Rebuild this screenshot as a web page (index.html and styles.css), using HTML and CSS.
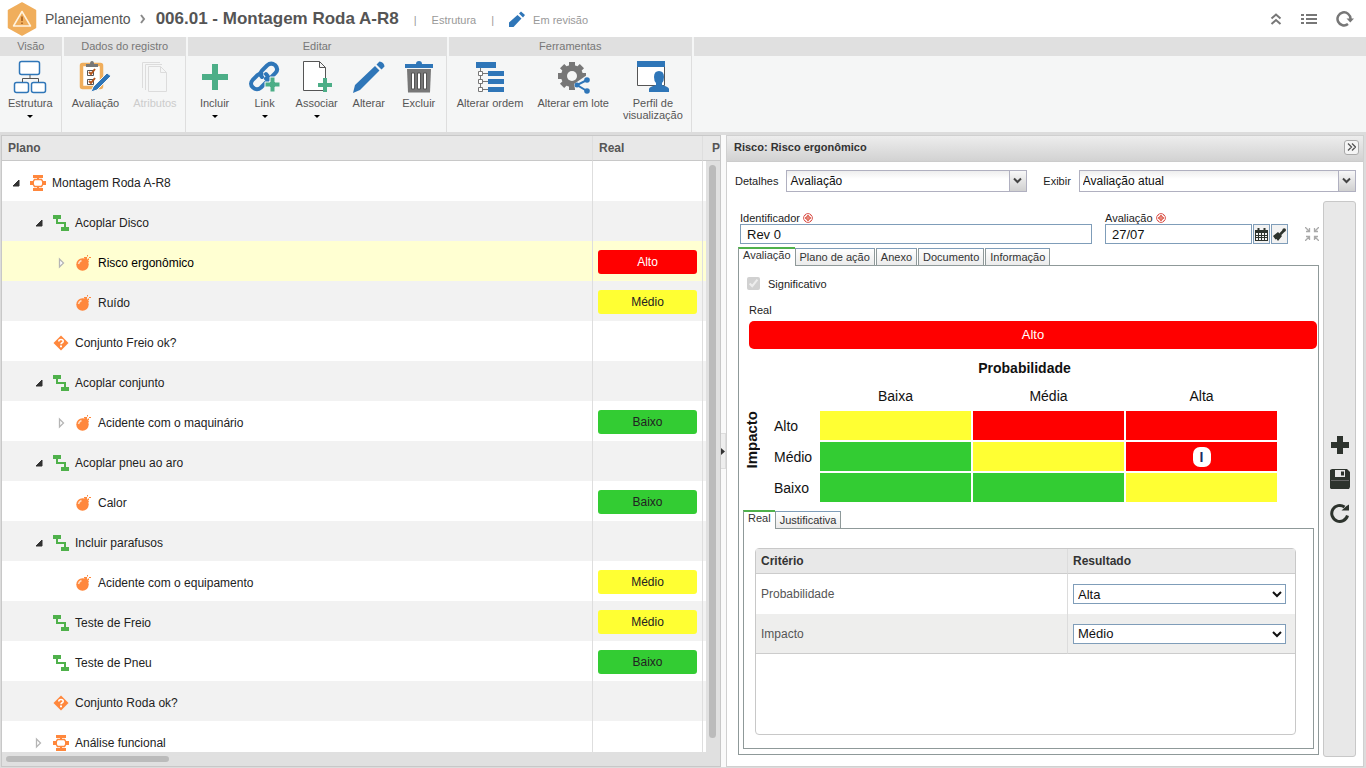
FILE: index.html
```html
<!DOCTYPE html>
<html lang="pt-BR">
<head>
  <meta charset="UTF-8">
  <meta name="viewport" content="width=device-width, initial-scale=1.0">
  <title>Planejamento</title>
  <link rel="stylesheet" href="styles.css">
</head>
<body>

  <!-- Shared icons -->
  <svg class="sprite" aria-hidden="true">
    <symbol id="open" viewBox="0 0 12 12"><path d="M9 3v6H3z" fill="#333" stroke="#333" stroke-linejoin="round"/></symbol>
    <symbol id="closed" viewBox="0 0 12 12"><path d="M3.500 2v8l4-4z" fill="#fff" stroke="#b5b5b5" stroke-width="1.300"/></symbol>
    <symbol id="plan" viewBox="0 0 16 16">
      <path d="M3 0h10v3H3zM3 13h10v3H3zM7 2h2v3H7zM7 11h2v3H7zM0 6h4v4H0zM12 6h4v4h-4z" fill="#ff873c"/>
      <path d="M4.500 4.500h7l2 3.500-2 3.500h-7L2.500 8z" fill="none" stroke="#ff873c" stroke-width="1.500"/>
    </symbol>
    <symbol id="activity" viewBox="0 0 16 16">
      <path d="M0 0h8v4H0zM8 12h8v4H8z" fill="#4fb14b"/>
      <path d="M4 3v5h8v5" fill="none" stroke="#4fb14b" stroke-width="2"/>
    </symbol>
    <symbol id="bomb" viewBox="0 0 16 16">
      <circle cx="6.500" cy="9.500" r="6.200" fill="#ff873c"/>
      <path d="M7 4l3.500-1.500 2.500 4-2 2z" fill="#ff873c"/>
      <path d="M8 2.500h3M13 2.500h2M11.500 0v1.500M12.500 3.500v1.500" stroke="#ff873c" fill="none"/>
      <path d="M2.500 9q.5-2.500 3-3.500" stroke="#ffdcc2" stroke-width="1.500" fill="none"/>
    </symbol>
    <symbol id="decision" viewBox="0 0 16 16">
      <path d="M8 .5L15.500 8 8 15.500.5 8z" fill="#ff873c"/>
      <path d="M5.800 6.500q0-2 2.200-2t2.200 1.700q0 1-1.100 1.500-1.100.6-1.100 1.600" fill="none" stroke="#fff" stroke-width="1.600"/>
      <path d="M7 10.500h2v1.800H7z" fill="#fff"/>
    </symbol>
    <symbol id="required" viewBox="0 0 10 10">
      <circle cx="5" cy="5" r="4.400" fill="#fff" stroke="#d9534f"/>
      <path d="M5 2v6M2 5h6" stroke="#d9432f" stroke-width="1.500"/>
      <path d="M2.500 2.500l5 5M7.500 2.500l-5 5" stroke="#e58a80"/>
    </symbol>
  </svg>

  <header class="topbar">
    <svg class="logo" viewBox="0 0 30 34">
      <path d="M15 1l13.500 7.500v17L15 33 1.500 25.500v-17z" fill="#f0ae5c" stroke="#f0ae5c" stroke-width="1.500" stroke-linejoin="round"/>
      <path d="M15 9.500l8.500 14.500h-17z" fill="none" stroke="#fff3df" stroke-width="1.500" stroke-linejoin="round"/>
      <path d="M15 14.500v4.500M15 20.500v1.500" stroke="#a35a1a" stroke-width="1.500"/>
    </svg>
    <a href="#" class="crumb">Planejamento</a>
    <svg class="crumb-arrow" viewBox="0 0 6 10"><path d="M1 1l3 4-3 4" fill="none" stroke="#8a8a8a" stroke-width="2"/></svg>
    <h1>006.01 - Montagem Roda A-R8</h1>
    <span class="meta bar">|</span>
    <span class="meta">Estrutura</span>
    <span class="meta bar">|</span>
    <svg class="status-icon" viewBox="0 0 16 16"><path d="M0 16v-4.500L8.500 4 12.500 7.500 4.500 16zM10 2.500l2-2L16 4l-2 2.500z" fill="#2f76b8"/></svg>
    <span class="meta">Em revisão</span>
    <div class="top-actions">
      <button aria-label="Recolher"><svg width="12" height="14" viewBox="0 0 12 14"><path d="M1.500 6.500L6 2.500l4.500 4M1.500 12L6 8l4.500 4" fill="none" stroke="#777" stroke-width="2"/></svg></button>
      <button aria-label="Lista"><svg width="16" height="12" viewBox="0 0 16 12"><path d="M0 2h3M5 2h11M0 6h3M5 6h11M0 10h3M5 10h11" stroke="#777" stroke-width="2"/></svg></button>
      <button aria-label="Atualizar"><svg width="18" height="16" viewBox="0 0 18 16"><path d="M12 13A6.500 6.500 0 1 1 14.500 8" fill="none" stroke="#777" stroke-width="2.500"/><path d="M10.500 7.500H18l-3.700 4z" fill="#777"/></svg></button>
    </div>
  </header>

  <nav class="ribbon">
    <section class="group">
      <h2>Visão</h2>
      <div class="tools">
        <button>
          <svg viewBox="0 0 34 34"><g fill="#fff" stroke="#2f76b8" stroke-width="1.500"><rect x="6.500" y="1.500" width="20" height="13" rx="2"/><rect x="1.500" y="22.500" width="14" height="10" rx="2"/><rect x="18.500" y="22.500" width="14" height="10" rx="2"/></g><path d="M17 15v4M9.500 22v-3.500h16V22" fill="none" stroke="#555"/></svg>
          <span>Estrutura</span><i class="caret"></i>
        </button>
      </div>
    </section>
    <section class="group">
      <h2>Dados do registro</h2>
      <div class="tools">
        <button>
          <svg viewBox="0 0 34 34"><rect x="3.500" y="4.500" width="20" height="23" rx="1" fill="#fff" stroke="#f0ae5c" stroke-width="3.500"/><path d="M8 7V4h4q0-3 2-3t2 3h4v3z" fill="#777"/><path d="M9.500 10.500h6v5h-6zM9.500 19.500h6v5h-6z" fill="#fff" stroke="#555"/><path d="M11 12l2 2 4-5M11 21l2 2 4-5" fill="none" stroke="#b5561d" stroke-width="2"/><path d="M13 32l2-5L29 13l4 3-14 14z" fill="#2f76b8" stroke="#f5f6f6"/></svg>
          <span>Avaliação</span>
        </button>
        <button disabled>
          <svg viewBox="0 0 34 34"><path d="M4.500 28V2.500H22M7.500 30V4.500H24M10.500 6.500h12l6 6v19h-18zM22.500 6.500v6h6" fill="none" stroke="#dcdcdc"/></svg>
          <span>Atributos</span>
        </button>
      </div>
    </section>
    <section class="group edit">
      <h2>Editar</h2>
      <div class="tools">
        <button>
          <svg viewBox="0 0 34 34"><path d="M14 4h6v10h10v6H20v10h-6V20H4v-6h10z" fill="#4cae87"/></svg>
          <span>Incluir</span><i class="caret"></i>
        </button>
        <button>
          <svg viewBox="0 0 34 34"><g fill="none" stroke="#2f76b8" stroke-width="4" stroke-linecap="round"><path d="M14 17q-3-3 0-6.500l5-5q4-3.500 8-.5 4 4 .5 8L23 17.500q-2.500 2-5 1"/><path d="M18 14q4 3.500 1 7.500l-6 6q-4 3.500-8 0t0-8l4.500-4.500q2-1.500 4-1"/></g><path d="M22 17h5v5h5v5h-5v5h-5v-5h-5v-5h5z" fill="#4cae87" stroke="#f5f6f6"/></svg>
          <span>Link</span><i class="caret"></i>
        </button>
        <button>
          <svg viewBox="0 0 34 34"><path d="M3.500 1.500h16l6 6v23h-22zM19.500 1.500v6h6" fill="#fff" stroke="#555"/><path d="M23 18h4v5h5v4h-5v5h-4v-5h-5v-4h5z" fill="#4cae87"/></svg>
          <span>Associar</span><i class="caret"></i>
        </button>
        <button>
          <svg viewBox="0 0 34 34"><path d="M1 33l2-8L23 6l4.500 4.500L8 30zM24.500 4.500l3-3q2 0 3.500 1.500t1.500 3.500l-3 3z" fill="#2f76b8"/></svg>
          <span>Alterar</span>
        </button>
        <button>
          <svg viewBox="0 0 34 34"><path d="M3 4h11q0-3 3-3t3 3h11v4H3z" fill="#2f76b8"/><path d="M5 9h24l-1 23.500H6z" fill="#777"/><path d="M9.500 13h3v16h-3zM15.500 13h3v16h-3zM21.500 13h3v16h-3z" fill="#fff" stroke="#555"/></svg>
          <span>Excluir</span>
        </button>
      </div>
    </section>
    <section class="group">
      <h2>Ferramentas</h2>
      <div class="tools">
        <button>
          <svg viewBox="0 0 34 34"><path d="M3 2h20v6H3zM15 11h16v5H15zM15 19h16v5H15zM15 27h16v5H15z" fill="#2f76b8"/><path d="M7.500 8v24M7 13.500h8M7 21.500h8M7 29.500h8" stroke="#777"/><path d="M5.500 11.500h4v4h-4zM5.500 19.500h4v4h-4zM5.500 27.500h4v4h-4z" fill="#fff" stroke="#777"/></svg>
          <span>Alterar ordem</span>
        </button>
        <button>
          <svg viewBox="0 0 34 34"><g fill="#777"><circle cx="16" cy="16" r="11"/><g id="teeth"><path d="M13 2h6v28h-6z"/><path d="M2 13h28v6H2z"/></g><use href="#teeth" transform="rotate(45 16 16)"/></g><circle cx="16" cy="16" r="5" fill="#f5f6f6"/><path d="M18 24l13-9 3 5v14H20z" fill="#f5f6f6"/><path d="M31 20l-10 5 10 6" fill="none" stroke="#2f76b8" stroke-width="2"/><g fill="#2f76b8"><circle cx="31" cy="20" r="2.800"/><circle cx="21" cy="25" r="2.500"/><circle cx="31" cy="31" r="2.800"/></g></svg>
          <span>Alterar em lote</span>
        </button>
        <button>
          <svg viewBox="0 0 34 34"><path d="M1.500 4.500h27v21h-27z" fill="#fff" stroke="#555"/><path d="M1 1h28v6H1z" fill="#2f76b8"/><path d="M18 17q0-6 5-6t5 6q0 4-2 6v2q7 2 7 4v3H13v-3q0-2 7-4v-2q-2-2-2-6z" fill="#2f76b8"/></svg>
          <span>Perfil de<br>visualização</span>
        </button>
      </div>
    </section>
    <section class="group rest"><h2></h2></section>
  </nav>

  <main>
    <div class="tree-panel">
      <div class="tree-wrap">
        <table class="tree">
          <colgroup><col><col class="col-real"><col class="col-next"></colgroup>
          <thead>
            <tr><th>Plano</th><th>Real</th><th>P</th></tr>
          </thead>
          <tbody>
            <tr><td><div class="node"><svg><use href="#open"/></svg><svg class="type"><use href="#plan"/></svg>Montagem Roda A-R8</div></td><td></td><td></td></tr>
            <tr><td><div class="node level-1"><svg><use href="#open"/></svg><svg class="type"><use href="#activity"/></svg>Acoplar Disco</div></td><td></td><td></td></tr>
            <tr class="selected"><td><div class="node level-2"><svg><use href="#closed"/></svg><svg class="type"><use href="#bomb"/></svg>Risco ergonômico</div></td><td><span class="badge high">Alto</span></td><td></td></tr>
            <tr><td><div class="node level-2"><svg></svg><svg class="type"><use href="#bomb"/></svg>Ruído</div></td><td><span class="badge medium">Médio</span></td><td></td></tr>
            <tr><td><div class="node level-1"><svg></svg><svg class="type"><use href="#decision"/></svg>Conjunto Freio ok?</div></td><td></td><td></td></tr>
            <tr><td><div class="node level-1"><svg><use href="#open"/></svg><svg class="type"><use href="#activity"/></svg>Acoplar conjunto</div></td><td></td><td></td></tr>
            <tr><td><div class="node level-2"><svg><use href="#closed"/></svg><svg class="type"><use href="#bomb"/></svg>Acidente com o maquinário</div></td><td><span class="badge low">Baixo</span></td><td></td></tr>
            <tr><td><div class="node level-1"><svg><use href="#open"/></svg><svg class="type"><use href="#activity"/></svg>Acoplar pneu ao aro</div></td><td></td><td></td></tr>
            <tr><td><div class="node level-2"><svg></svg><svg class="type"><use href="#bomb"/></svg>Calor</div></td><td><span class="badge low">Baixo</span></td><td></td></tr>
            <tr><td><div class="node level-1"><svg><use href="#open"/></svg><svg class="type"><use href="#activity"/></svg>Incluir parafusos</div></td><td></td><td></td></tr>
            <tr><td><div class="node level-2"><svg></svg><svg class="type"><use href="#bomb"/></svg>Acidente com o equipamento</div></td><td><span class="badge medium">Médio</span></td><td></td></tr>
            <tr><td><div class="node level-1"><svg></svg><svg class="type"><use href="#activity"/></svg>Teste de Freio</div></td><td><span class="badge medium">Médio</span></td><td></td></tr>
            <tr><td><div class="node level-1"><svg></svg><svg class="type"><use href="#activity"/></svg>Teste de Pneu</div></td><td><span class="badge low">Baixo</span></td><td></td></tr>
            <tr><td><div class="node level-1"><svg></svg><svg class="type"><use href="#decision"/></svg>Conjunto Roda ok?</div></td><td></td><td></td></tr>
            <tr><td><div class="node level-1"><svg><use href="#closed"/></svg><svg class="type"><use href="#plan"/></svg>Análise funcional</div></td><td></td><td></td></tr>
          </tbody>
        </table>
        <div class="scroll-y"><div class="thumb"></div></div>
      </div>
      <div class="scroll-x"><div class="thumb"></div></div>
    </div>

    <div class="splitter"><div class="handle"><svg width="4" height="7" viewBox="0 0 4 7"><path d="M0 0l4 3.500L0 7z" fill="#333"/></svg></div></div>

    <div class="detail-panel">
      <div class="panel-title">
        <h2>Risco: Risco ergonômico</h2>
        <button class="collapse" aria-label="Fechar painel"><svg width="9" height="8" viewBox="0 0 9 8"><path d="M1 .5L4.500 4 1 7.500M5 .5L8.500 4 5 7.500" fill="none" stroke="#555" stroke-width="1.300"/></svg></button>
      </div>

      <div class="filters">
        <label for="detalhes">Detalhes</label>
        <select id="detalhes" class="combo"><option>Avaliação</option></select>
        <label for="exibir" class="second">Exibir</label>
        <select id="exibir" class="combo wide"><option>Avaliação atual</option></select>
      </div>

      <div class="workspace">
        <div class="form">
          <div class="fields">
            <div class="field grow">
              <label for="ident">Identificador <svg class="req"><use href="#required"/></svg></label>
              <input type="text" id="ident" value="Rev 0">
            </div>
            <div class="field date">
              <label for="data">Avaliação <svg class="req"><use href="#required"/></svg></label>
              <div class="date-row">
                <input type="text" id="data" value="27/07">
                <button aria-label="Calendário"><svg width="13" height="13" viewBox="0 0 13 13"><path d="M0 2h13v11H0zM2.500 0h2v3h-2zM8.500 0h2v3h-2z" fill="#2d332d"/><path d="M1 5h2v2H1zM4 5h2v2H4zM7 5h2v2H7zM10 5h2v2h-2zM1 8h2v1H1zM4 8h2v1H4zM7 8h2v1H7zM10 8h2v1h-2zM1 10h2v2H1zM4 10h2v2H4zM7 10h2v2H7zM10 10h2v2h-2z" fill="#f2f2f2"/></svg></button>
                <button aria-label="Limpar"><svg width="13" height="13" viewBox="0 0 13 13"><path d="M0 8l5-4 4 4-4 5-1.500-2-1 .500z" fill="#2d332d"/><path d="M7 6.500l4-4" stroke="#2d332d" stroke-width="2.500"/><circle cx="11.200" cy="2" r="1.800" fill="#2d332d"/></svg></button>
              </div>
            </div>
            <svg class="shrink" viewBox="0 0 14 14"><path d="M0 0l4 4M14 0l-4 4M0 14l4-4M14 14l-4-4M4.500 1v3.500H1M9.500 1v3.500H13M1 9.500h3.500V13M13 9.500H9.500V13" fill="none" stroke="#aaa" stroke-width="1.300"/></svg>
          </div>

          <div class="tabs">
            <button class="tab active">Avaliação</button>
            <button class="tab">Plano de ação</button>
            <button class="tab">Anexo</button>
            <button class="tab">Documento</button>
            <button class="tab">Informação</button>
          </div>
          <div class="tab-panel">
            <div class="check-row">
              <input type="checkbox" id="signif" checked disabled>
              <label for="signif">Significativo</label>
            </div>
            <p class="real-label">Real</p>
            <div class="real-bar">Alto</div>

            <table class="matrix">
              <colgroup><col class="axis"><col class="names"><col><col><col></colgroup>
              <tr class="axis-row"><td></td><th colspan="4">Probabilidade</th></tr>
              <tr class="scale"><td></td><td></td><td>Baixa</td><td>Média</td><td>Alta</td></tr>
              <tr><th rowspan="3" class="vertical"><span>Impacto</span></th><td>Alto</td><td class="medium"></td><td class="high"></td><td class="high"></td></tr>
              <tr><td>Médio</td><td class="low"></td><td class="medium"></td><td class="high"><span class="marker">I</span></td></tr>
              <tr><td>Baixo</td><td class="low"></td><td class="low"></td><td class="medium"></td></tr>
            </table>

            <div class="inner">
              <div class="tabs">
                <button class="tab active">Real</button>
                <button class="tab">Justificativa</button>
              </div>
              <div class="tab-panel inner-panel">
                <div class="grid-box">
                  <table class="criteria">
                    <thead>
                      <tr><th>Critério</th><th>Resultado</th></tr>
                    </thead>
                    <tbody>
                      <tr><td><label for="prob">Probabilidade</label></td><td><select id="prob"><option>Alta</option></select></td></tr>
                      <tr><td><label for="imp">Impacto</label></td><td><select id="imp"><option>Médio</option></select></td></tr>
                    </tbody>
                  </table>
                </div>
              </div>
            </div>
          </div>
        </div>

        <div class="side-tools">
          <button aria-label="Novo"><svg viewBox="0 0 20 20"><path d="M7 1h6v6h6v6h-6v6H7v-6H1V7h6z" fill="#2d332d"/></svg></button>
          <button aria-label="Salvar"><svg viewBox="0 0 20 20"><path d="M2 0h15l3 3v15l-1 2H1l-1-1V1z" fill="#2d332d"/><path d="M5 1h10v7H5z" fill="#e8e8e8"/><path d="M11 2.500h3v4h-3z" fill="#2d332d"/><path d="M1 11.500h18" stroke="#666"/></svg></button>
          <button aria-label="Atualizar"><svg viewBox="0 0 20 20"><path d="M14.500 4A8 8 0 1 0 17.500 12.500" fill="none" stroke="#2d332d" stroke-width="3"/><path d="M11.500 7.500H19V1.500L16.500 3z" fill="#2d332d"/></svg></button>
        </div>
      </div>
    </div>
  </main>

</body>
</html>
```

FILE: styles.css
```css
* {
  box-sizing: border-box;
}

body {
  margin: 0;
  height: 100vh;
  display: flex;
  flex-direction: column;
  overflow: hidden;
  background: #dcdcdc;
  color: #222;
  font-family: "Liberation Sans", Arial, sans-serif;
  font-size: 12px;
}

h1, h2, p {
  margin: 0;
}

button, input, select {
  font-family: inherit;
  margin: 0;
}

button {
  padding: 0;
  border: none;
  background: none;
  cursor: pointer;
}

svg {
  display: block;
  flex: none;
}

.sprite {
  position: absolute;
  width: 0;
  height: 0;
}

/* Top bar */
.topbar {
  display: flex;
  align-items: center;
  height: 37px;
  flex: none;
  padding: 0 12px 0 7px;
  background: #fff;
}

.logo {
  width: 30px;
  height: 34px;
}

.crumb {
  margin-left: 8px;
  color: #555;
  font-size: 14px;
  text-decoration: none;
}

.crumb-arrow {
  width: 6px;
  height: 10px;
  margin: 0 10px 0 9px;
}

.topbar h1 {
  color: #555;
  font-size: 17px;
}

.meta {
  color: #999;
  font-size: 11px;
  padding-top: 3px;
}

.meta.bar {
  margin: 0 15px;
}

.status-icon {
  width: 16px;
  height: 16px;
  margin-right: 8px;
}

.top-actions {
  display: flex;
  align-items: center;
  gap: 19px;
  margin-left: auto;
}

/* Ribbon */
.ribbon {
  display: flex;
  flex: none;
  gap: 2px;
  height: 95px;
  background: #f5f6f6;
}

.group {
  display: flex;
  flex-direction: column;
}

.group h2 {
  height: 19px;
  background: #e0e0e0;
  color: #777;
  font-size: 11px;
  font-weight: normal;
  line-height: 19px;
  text-align: center;
}

.tools {
  display: flex;
  flex: 1;
  align-items: flex-start;
  padding: 4px 1px 0;
  border-right: 1px solid #dedede;
}

.edit .tools {
  padding: 4px 2px 0;
}

.tools button {
  display: flex;
  flex-direction: column;
  align-items: center;
  min-width: 50px;
  padding: 0 7px;
  color: #555;
  font-size: 11px;
  line-height: 12px;
}

.edit .tools button {
  padding: 0 6px;
}

.tools button:disabled {
  color: #ccc;
}

.tools svg {
  width: 34px;
  height: 34px;
  margin-bottom: 3px;
}

.caret {
  margin-top: 6px;
  border: 3px solid transparent;
  border-top-color: #000;
  border-bottom: none;
}

.rest {
  flex: 1;
}

/* Main area */
main {
  display: grid;
  grid-template-columns: 720fr 5px 638fr;
  flex: 1;
  min-height: 0;
  padding: 3px 2px 1px 1px;
}

.tree-panel {
  display: flex;
  flex-direction: column;
  min-height: 0;
  border: 1px solid #c8c8c8;
  background: #fff;
}

.tree-wrap {
  position: relative;
  flex: 1;
  min-height: 0;
  overflow: hidden;
}

.tree {
  width: 100%;
  table-layout: fixed;
  border-collapse: separate;
  border-spacing: 0;
}

.col-real {
  width: 110px;
}

.col-next {
  width: 18px;
}

.tree th {
  height: 25px;
  padding: 0 6px;
  border-bottom: 1px solid #c8c8c8;
  background: #e8e8e8;
  color: #555;
  text-align: left;
}

.tree th + th,
.tree td + td {
  border-left: 1px solid #dedede;
}

.tree th:last-child {
  padding: 0 0 0 9px;
}

.tree td {
  height: 40px;
  padding: 2px 5px 0;
}

.tree td:first-child {
  padding: 0;
}

.tree tbody tr:nth-child(even) {
  background: #f2f2f2;
}

.tree tbody tr.selected {
  background: #ffffd2;
  color: #000;
}

.node {
  display: flex;
  align-items: center;
  padding: 3px 0 0 8px;
}

.node.level-1 {
  padding-left: 31px;
}

.node.level-2 {
  padding-left: 54px;
}

.node svg {
  width: 12px;
  height: 12px;
}

.node svg.type {
  width: 16px;
  height: 16px;
  margin: 0 6px 0 8px;
}

.badge {
  display: block;
  height: 24px;
  border-radius: 3px;
  line-height: 24px;
  text-align: center;
}

.high {
  background: #f00;
  color: #fff;
}

.medium {
  background: #ff3;
}

.low {
  background: #3c3;
}

/* The scrollbar lies over the last column */
.scroll-y {
  position: absolute;
  top: 25px;
  right: 0;
  bottom: 0;
  width: 14px;
  padding: 4px 4px 14px 3px;
  background: #e0e0e0;
}

.thumb {
  border-radius: 4px;
  background: #bbb;
}

.scroll-y .thumb {
  height: 100%;
}

.scroll-x {
  flex: none;
  height: 14px;
  padding: 4px;
  background: #e0e0e0;
}

.scroll-x .thumb {
  width: 23%;
  height: 6px;
}

.splitter {
  display: flex;
  align-items: center;
  background: #fafafa;
}

.handle {
  display: flex;
  align-items: center;
  justify-content: center;
  width: 100%;
  height: 36px;
  border: 1px solid #ddd;
  border-left: none;
  background: #eee;
}

/* Detail panel */
.detail-panel {
  display: flex;
  flex-direction: column;
  min-width: 0;
  min-height: 0;
  border: 1px solid #d0d0d0;
  background: #fff;
}

.panel-title {
  display: flex;
  align-items: center;
  justify-content: space-between;
  height: 26px;
  padding: 0 4px 3px 7px;
  border-bottom: 1px solid #ccc;
  background: linear-gradient(#ededed, #d2d2d2);
}

.panel-title h2 {
  color: #333;
  font-size: 11px;
}

.collapse {
  display: flex;
  align-items: center;
  justify-content: center;
  width: 15px;
  height: 15px;
  border: 1px solid #aaa;
  border-radius: 3px;
  background: #f5f5f5;
}

.filters {
  display: flex;
  align-items: center;
  gap: 8px;
  padding: 8px 7px 0 8px;
  font-size: 11px;
}

.filters .second {
  margin-left: 8px;
}

.combo {
  flex: 238 1 0;
  min-width: 0;
  height: 22px;
  padding: 0 20px 0 3px;
  border: 1px solid #b0b0c0;
  border-radius: 0;
  color: #111;
  font-size: 12px;
  appearance: none;
  background:
    url("data:image/svg+xml,%3Csvg xmlns='http://www.w3.org/2000/svg' width='17' height='20'%3E%3Cpath d='M.5 0v20' stroke='%23b0b0c0'/%3E%3Cpath d='M5 7.500l3.500 3.500L12 7.500' fill='none' stroke='%23444' stroke-width='2'/%3E%3C/svg%3E") right / 17px 20px no-repeat,
    linear-gradient(#f8f8f8, #d0d0d0) right / 17px 100% no-repeat,
    linear-gradient(#eee, #fff 8px);
}

.combo.wide {
  flex-grow: 278;
}

.workspace {
  display: flex;
  flex: 1;
  gap: 4px;
  min-height: 0;
  padding: 9px 7px 9px 11px;
}

.form {
  display: flex;
  flex: 1;
  flex-direction: column;
  min-width: 0;
  padding: 11px 0 2px;
}

.fields {
  display: flex;
  align-items: flex-end;
  padding: 0 0 0 2px;
  margin-bottom: 3px;
}

.field label {
  display: flex;
  align-items: center;
  gap: 3px;
  height: 12px;
  font-size: 11px;
  line-height: 12px;
}

.req {
  width: 10px;
  height: 10px;
}

.field input {
  display: block;
  width: 100%;
  min-width: 0;
  height: 20px;
  padding: 0 6px;
  border: 1px solid #7f9db9;
  color: #111;
  font-size: 13px;
}

.grow {
  flex: 1;
}

.date {
  width: 183px;
  margin: 0 17px 0 13px;
}

.date-row {
  display: flex;
  gap: 1px;
}

.date-row button {
  display: flex;
  flex: none;
  align-items: center;
  justify-content: center;
  width: 17px;
  height: 20px;
  border: 1px solid #7f9db9;
  background: #f2f2f2;
}

.shrink {
  width: 14px;
  height: 14px;
  margin-bottom: 3px;
}

/* Tabs */
.tabs {
  display: flex;
  align-items: flex-end;
  gap: 1px;
  height: 19px;
  margin-bottom: -1px;
}

.tab {
  height: 18px;
  padding: 0 4px 1px;
  border: 1px solid #8f9999;
  border-top-color: #7f9db9;
  background: linear-gradient(#fff, #ebebeb);
  color: #333;
  font-size: 11px;
}

.tab.active {
  position: relative;
  height: 19px;
  padding: 0 4px 6px;
  border-top: 2px solid #4fb14b;
  border-right: none;
  border-bottom: none;
  background: #fff;
  margin-right: -1px;
}

.tab-panel {
  display: flex;
  flex: 1;
  flex-direction: column;
  min-height: 0;
  border: 1px solid #8f9999;
}

.check-row {
  display: flex;
  align-items: center;
  gap: 8px;
  padding: 11px 0 0 8px;
  font-size: 11px;
}

.real-label {
  margin: 13px 0 4px 10px;
  font-size: 11px;
  line-height: 14px;
}

.real-bar {
  flex: none;
  height: 28px;
  margin: 0 1px 8px 10px;
  border-radius: 5px;
  background: #f00;
  color: #fff;
  font-size: 13px;
  line-height: 28px;
  text-align: center;
}

/* Risk matrix */
.matrix {
  width: calc(100% - 39px);
  table-layout: fixed;
  border-spacing: 2px;
  color: #111;
  font-size: 14px;
  text-align: center;
}

.matrix .axis {
  width: 21px;
}

.matrix .names {
  width: 54px;
}

.matrix th,
.matrix td {
  height: 29px;
  padding: 0;
}

.matrix .axis-row th,
.matrix .axis-row td {
  height: 18px;
  padding-left: 8px;
}

.matrix .scale td {
  height: 30px;
  padding-top: 4px;
}

.matrix tr:nth-child(3) td:nth-child(2),
.matrix tr:nth-child(n+4) td:first-child {
  padding-left: 10px;
  text-align: left;
}

.matrix .vertical {
  padding-bottom: 30px;
  font-size: 15px;
  vertical-align: top;
}

.vertical span {
  display: block;
  margin: 0 auto;
  writing-mode: vertical-rl;
  transform: rotate(180deg);
}

.marker {
  display: block;
  width: 18px;
  height: 20px;
  margin: 0 auto;
  border-radius: 7px;
  background: #fff;
  color: #1c2c66;
  font-weight: bold;
  line-height: 20px;
}

.inner {
  display: flex;
  flex: 1;
  flex-direction: column;
  min-height: 0;
  margin: 6px 4px 5px;
}

.inner-panel {
  padding: 19px 17px 13px 11px;
}

.grid-box {
  flex: 1;
  border: 1px solid #c8c8c8;
  border-radius: 4px;
}

.criteria {
  width: 100%;
  table-layout: fixed;
  border-collapse: separate;
  border-spacing: 0;
  color: #555;
}

.criteria th,
.criteria td {
  height: 40px;
  padding: 0 9px 0 5px;
  text-align: left;
}

.criteria th {
  height: 25px;
  border-bottom: 1px solid #ccc;
  background: #e8e8e8;
  color: #333;
}

.criteria th + th {
  width: 228px;
}

.criteria th + th,
.criteria td + td {
  border-left: 1px solid #dcdcdc;
}

.criteria tr:nth-child(even) td {
  border-bottom: 1px solid #ccc;
  background: #eeeeed;
}

.criteria select {
  width: 100%;
  height: 20px;
  border: 1px solid #7f9db9;
  border-radius: 0;
  background: #fff;
  color: #111;
  font-size: 13px;
}

.side-tools {
  display: flex;
  flex: none;
  flex-direction: column;
  align-items: center;
  justify-content: center;
  gap: 14px;
  width: 33px;
  border: 1px solid #c8c8c8;
  border-radius: 3px;
  background: #e8e8e8;
}

.side-tools svg {
  width: 20px;
  height: 20px;
}
```
